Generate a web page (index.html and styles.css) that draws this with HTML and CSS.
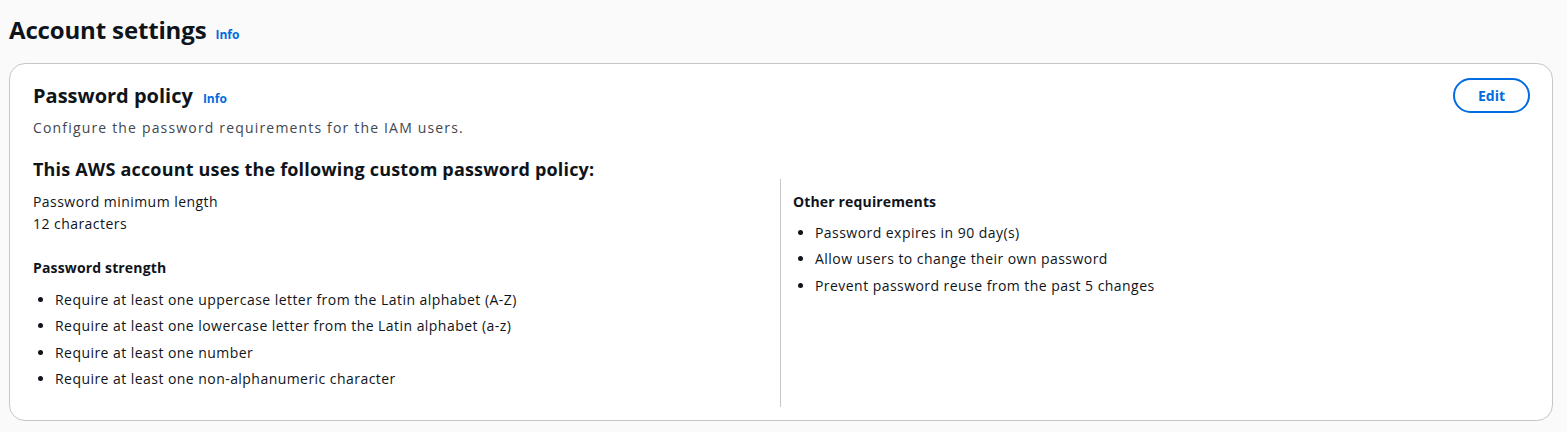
FILE: index.html
```html
<!DOCTYPE html>
<html lang="en">
<head>
<meta charset="utf-8">
<title>Account settings</title>
<link rel="stylesheet" href="styles.css">
</head>
<body>
<div class="page">
  <div class="page-header">
    <h1 class="page-title">Account settings</h1>
    <a class="info" href="#">Info</a>
  </div>
  <section class="card">
    <div class="card-header">
      <div class="card-heading">
        <div class="card-title-row">
          <h2 class="card-title">Password policy</h2>
          <a class="info" href="#">Info</a>
        </div>
        <p class="card-desc">Configure the password requirements for the IAM users.</p>
      </div>
      <button class="btn">Edit</button>
    </div>
    <h3 class="policy-title">This AWS account uses the following custom password policy:</h3>
    <div class="columns">
      <div class="col col-left">
        <div class="kv">
          <div>Password minimum length</div>
          <div>12 characters</div>
        </div>
        <div class="group-label">Password strength</div>
        <ul class="list">
          <li>Require at least one uppercase letter from the Latin alphabet (A-Z)</li>
          <li>Require at least one lowercase letter from the Latin alphabet (a-z)</li>
          <li>Require at least one number</li>
          <li>Require at least one non-alphanumeric character</li>
        </ul>
      </div>
      <div class="col col-right">
        <div class="group-label first">Other requirements</div>
        <ul class="list">
          <li>Password expires in 90 day(s)</li>
          <li>Allow users to change their own password</li>
          <li>Prevent password reuse from the past 5 changes</li>
        </ul>
      </div>
    </div>
  </section>
</div>
</body>
</html>
```
FILE: styles.css
```css
html, body {
  margin: 0;
  padding: 0;
  background: #fafafa;
}
body {
  font-family: "Open Sans", "Noto Sans", sans-serif;
  color: #0f141a;
  font-size: 14px;
}
.page {
  padding: 14px 14px 0 9px;
}
.page-header {
  display: flex;
  align-items: baseline;
  gap: 9px;
  height: 35px;
}
.page-title {
  margin: 0;
  font-size: 24px;
  line-height: 32px;
  font-weight: 700;
  letter-spacing: -0.15px;
}
.info {
  color: #006ce0;
  font-size: 12px;
  font-weight: 700;
  text-decoration: none;
}
.card {
  margin-top: 14px;
  background: #fff;
  border: 1px solid #c6c6cd;
  border-radius: 16px;
  padding: 14px 23px 11px 23px;
  height: 358px;
  box-sizing: border-box;
}
.card-header {
  display: flex;
  justify-content: space-between;
  align-items: flex-start;
}
.card-title-row {
  display: flex;
  align-items: baseline;
  gap: 10px;
  margin-top: 6px;
}
.card-title {
  margin: 0;
  font-size: 20px;
  line-height: 24px;
  font-weight: 700;
}
.card-desc {
  margin: 10px 0 0;
  color: #424650;
  font-size: 14px;
  line-height: 20px;
  letter-spacing: 1.17px;
}
.btn {
  font-family: inherit;
  background: #fff;
  color: #006ce0;
  border: 2px solid #006ce0;
  border-radius: 20px;
  font-size: 14px;
  font-weight: 700;
  padding: 0;
  width: 77px;
  height: 35px;
  margin-right: -1px;
  cursor: pointer;
}
.policy-title {
  margin: 21px 0 0;
  font-size: 18px;
  line-height: 20px;
  font-weight: 700;
  letter-spacing: 0.18px;
}
.columns {
  display: grid;
  grid-template-columns: 747px 1fr;
  margin-top: 0;
}
.col {
  line-height: 22px;
  letter-spacing: 0.45px;
}
.col-left {
  padding-top: 12px;
}
.col-right {
  border-left: 1px solid #c6c6cd;
  padding-left: 12px;
  padding-top: 12px;
  height: 228px;
  box-sizing: border-box;
}
.kv div {
  line-height: 22px;
}
.group-label {
  font-weight: 700;
  margin-top: 22px;
  line-height: 22px;
  font-size: 14px;
  letter-spacing: 0.15px;
}
.group-label.first {
  margin-top: 0;
}
.list {
  margin: 11px 0 0;
  padding-left: 22px;
}
.col-right .list {
  margin-top: 10px;
}
.list li {
  line-height: 20px;
  margin-bottom: 6.4px;
}
```
